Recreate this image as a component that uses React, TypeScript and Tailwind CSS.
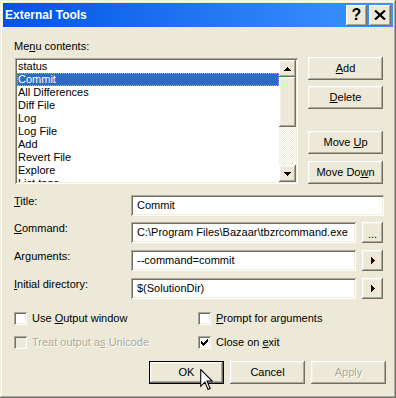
import React from "react";

// classic 3D edges
const raised =
  "shadow-[inset_-1px_-1px_#716f64,inset_1px_1px_#fff,inset_-2px_-2px_#aca899,inset_2px_2px_#f1efe2]";
const sunken =
  "shadow-[inset_1px_1px_#aca899,inset_-1px_-1px_#fff,inset_2px_2px_#716f64,inset_-2px_-2px_#f1efe2]";

const items = [
  "status",
  "Commit",
  "All Differences",
  "Diff File",
  "Log",
  "Log File",
  "Add",
  "Revert File",
  "Explore",
  "List tags",
];

function Button({
  children,
  isDefault = false,
  disabled = false,
  className = "",
}: {
  children: React.ReactNode;
  isDefault?: boolean;
  disabled?: boolean;
  className?: string;
}) {
  return (
    <div
      className={`flex h-[23px] w-[75px] items-center justify-center bg-[#ece9d8] ${raised} ${
        isDefault ? "border border-black" : ""
      } ${disabled ? "text-[#aca899] [text-shadow:1px_1px_0_#fff]" : ""} ${className}`}
    >
      <span className="whitespace-pre">{children}</span>
    </div>
  );
}

function Arrow({ dir }: { dir: "up" | "down" | "right" }) {
  if (dir === "right") {
    return (
      <svg width="4" height="7" viewBox="0 0 4 7" shapeRendering="crispEdges">
        <path d="M0 0h1v7h-1zM1 1h1v5h-1zM2 2h1v3h-1zM3 3h1v1h-1z" fill="#2a0000" />
      </svg>
    );
  }
  return (
    <svg
      width="7"
      height="4"
      viewBox="0 0 7 4"
      shapeRendering="crispEdges"
      className={dir === "down" ? "rotate-180" : ""}
    >
      <path d="M3 0h1v1h-1zM2 1h3v1h-3zM1 2h5v1h-5zM0 3h7v1h-7z" fill="#000" />
    </svg>
  );
}

function Scrollbar() {
  return (
    <div className="flex w-[17px] flex-col">
      <div className={`flex h-[17px] items-center justify-center bg-[#ece9d8] ${raised}`}>
        <Arrow dir="up" />
      </div>
      <div className={`h-[50px] bg-[#ece9d8] ${raised}`} />
      <div className="flex-1 bg-[image:conic-gradient(#ece9d8_25%,#fff_0_50%,#ece9d8_0_75%,#fff_0)] bg-[length:2px_2px]" />
      <div className={`flex h-[17px] items-center justify-center bg-[#ece9d8] ${raised}`}>
        <Arrow dir="down" />
      </div>
    </div>
  );
}

function Checkbox({
  label,
  checked = false,
  disabled = false,
}: {
  label: React.ReactNode;
  checked?: boolean;
  disabled?: boolean;
}) {
  return (
    <div className="flex h-[13px] items-center gap-[5px]">
      <div
        className={`flex h-[13px] w-[13px] items-center justify-center ${sunken} ${
          disabled ? "bg-[#ece9d8]" : "bg-white"
        }`}
      >
        {checked && (
          <svg width="7" height="7" viewBox="0 0 7 7" shapeRendering="crispEdges">
            <path d="M6 0h1v3h-1zM5 1h1v3h-1zM4 2h1v3h-1zM3 3h1v3h-1zM2 4h1v3h-1zM1 3h1v3h-1zM0 2h1v3h-1z" fill="#000" />
          </svg>
        )}
      </div>
      <span className={disabled ? "text-[#aca899] [text-shadow:1px_1px_0_#fff]" : ""}>{label}</span>
    </div>
  );
}

function Field({
  label,
  value,
  wide = false,
  extra,
  className = "",
}: {
  label: React.ReactNode;
  value: string;
  wide?: boolean;
  extra?: React.ReactNode;
  className?: string;
}) {
  return (
    <div className={`flex items-start ${className}`}>
      <div className="w-[117px]">{label}</div>
      <div
        className={`flex h-[21px] items-center overflow-hidden whitespace-nowrap bg-white pl-[6px] ${sunken} ${
          wide ? "w-[253px]" : "w-[225px]"
        }`}
      >
        {value}
      </div>
      {extra && (
        <div className={`ml-[6px] flex h-[21px] w-[21px] items-center justify-center bg-[#ece9d8] ${raised}`}>
          {extra}
        </div>
      )}
    </div>
  );
}

export default function App() {
  return (
    <div className="relative flex h-[398px] w-[396px] flex-col bg-[#ece9d8] p-[3px] font-['Liberation_Sans',Arial,sans-serif] text-[11px] leading-[13px] text-black shadow-[inset_-1px_-1px_#716f64,inset_1px_1px_#f1efe2,inset_-2px_-2px_#aca899,inset_2px_2px_#fff]">
      {/* Title bar */}
      <div className="flex h-[24px] shrink-0 items-center bg-gradient-to-r from-[#0054e3] to-[#3d95ff] pl-[2px] pr-[2px]">
        <span className="flex-1 text-[12px] font-bold text-white">External Tools</span>
        <div className={`flex h-[21px] w-[21px] items-center justify-center bg-[#ece9d8] ${raised}`}>
          <span className="text-[16px] font-bold leading-none">?</span>
        </div>
        <div className={`ml-[2px] flex h-[21px] w-[22px] items-center justify-center bg-[#ece9d8] ${raised}`}>
          <svg width="12" height="10" viewBox="0 0 12 10">
            <path d="M1 0.5L11 9.5M11 0.5L1 9.5" stroke="#000" strokeWidth="2.2" />
          </svg>
        </div>
      </div>

      <div className="flex flex-col pl-[11px]">
        <div className="flex">
          <div className="mt-[13px] flex flex-col">
            <div>
              Me<span className="underline">n</span>u contents:
            </div>
            <div className={`ml-px mt-[5px] flex h-[126px] w-[283px] bg-white p-[2px] ${sunken}`}>
              <ul className="flex-1 overflow-hidden">
                {items.map((item, i) => (
                  <li
                    key={item}
                    className={`h-[13px] whitespace-nowrap pl-px ${
                      i === 1
                        ? "bg-[#316ac5] text-white outline-1 outline-dotted outline-[#e6a53a] -outline-offset-1"
                        : ""
                    }`}
                  >
                    {item}
                  </li>
                ))}
              </ul>
              <Scrollbar />
            </div>
          </div>

          <div className="ml-[10px] mt-[30px] flex flex-col">
            <Button>
              <span className="underline">A</span>dd
            </Button>
            <Button className="mt-[6px]">
              <span className="underline">D</span>elete
            </Button>
            <Button className="mt-[22px]">
              Move <span className="underline">U</span>p
            </Button>
            <Button className="mt-[7px]">
              Move Do<span className="underline">w</span>n
            </Button>
          </div>
        </div>

        {/* Fields */}
        <Field
          className="mt-[11px]"
          wide
          label={
            <>
              <span className="underline">T</span>itle:
            </>
          }
          value="Commit"
        />
        <Field
          className="mt-[6px]"
          label={
            <>
              <span className="underline">C</span>ommand:
            </>
          }
          value="C:\Program Files\Bazaar\tbzrcommand.exe"
          extra={<span className="pt-[3px]">...</span>}
        />
        <Field
          className="mt-[7px]"
          label={
            <>
              Ar<span className="underline">g</span>uments:
            </>
          }
          value="--command=commit"
          extra={<Arrow dir="right" />}
        />
        <Field
          className="mt-[7px]"
          label={
            <>
              <span className="underline">I</span>nitial directory:
            </>
          }
          value="$(SolutionDir)"
          extra={<Arrow dir="right" />}
        />

        {/* Options */}
        <div className="mt-[13px] grid grid-cols-[184px_1fr] gap-y-[11px]">
          <Checkbox
            label={
              <>
                Use <span className="underline">O</span>utput window
              </>
            }
          />
          <Checkbox
            label={
              <>
                <span className="underline">P</span>rompt for arguments
              </>
            }
          />
          <Checkbox
            disabled
            label={
              <>
                Treat output a<span className="underline">s</span> Unicode
              </>
            }
          />
          <Checkbox
            checked
            label={
              <>
                Close on <span className="underline">e</span>xit
              </>
            }
          />
        </div>

        <div className="mt-[12px] flex justify-end gap-[6px] pr-[7px]">
          <Button isDefault>OK</Button>
          <Button>Cancel</Button>
          <Button disabled>Apply</Button>
        </div>
      </div>

      {/* mouse pointer over OK */}
      <svg
        className="absolute left-[200px] top-[369px]"
        width="13"
        height="21"
        viewBox="0 0 12 20"
      >
        <path
          d="M0.5 0.5L0.5 16.5L4.5 12.5L7.5 19.5L9.5 18.5L6.5 11.5L11.5 11.5Z"
          fill="#fff"
          stroke="#000"
          strokeWidth="1"
        />
      </svg>
    </div>
  );
}
